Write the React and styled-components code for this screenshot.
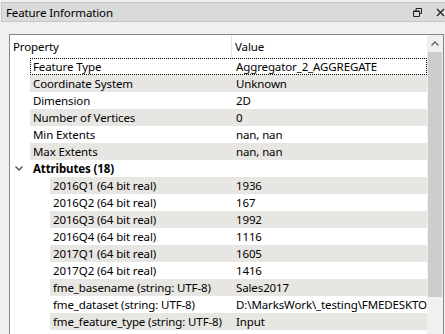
import styled, { createGlobalStyle } from 'styled-components';

const GlobalStyle = createGlobalStyle`
  html, body {
    margin: 0;
    padding: 0;
    background: #f0f0f0;
    overflow: hidden;
  }
  body {
    font-family: "Noto Sans", "Open Sans", sans-serif;
    font-size: 11.5px;
    letter-spacing: -0.12px;
    color: #000;
  }
`;

const SWindow = styled.div`
  width: 445px;
  height: 334px;
  padding-top: 2px;
  box-sizing: border-box;
  display: flex;
  flex-direction: column;
  overflow: hidden;
  background: #f0f0f0;
`;

const STitleBar = styled.div`
  height: 18px;
  margin-left: 1px;
  border: 1px solid #c6c6c6;
  border-right: none;
  background: #dadada;
  display: flex;
  align-items: center;
  padding-left: 4px;
  flex-shrink: 0;
`;

const STitle = styled.span`
  flex: 1;
  font-size: 11.5px;
`;

const STitleButton = styled.span`
  width: 10px;
  height: 10px;
  display: flex;
  align-items: center;
  justify-content: center;
  margin-left: ${(p) => p.gap || 0}px;
`;

const SBody = styled.div`
  flex: 1;
  padding: 12px 1px 0 9px;
  min-height: 0;
`;

const STree = styled.div`
  height: 100%;
  border: 1px solid #828790;
  border-bottom: none;
  background: #fff;
  display: flex;
`;

const SMain = styled.div`
  flex: 1;
  display: flex;
  flex-direction: column;
  min-width: 0;
  overflow: hidden;
`;

const SHeader = styled.div`
  height: 23px;
  display: flex;
  flex-shrink: 0;
`;

const SHeaderCell = styled.div`
  width: ${(p) => (p.w ? `${p.w}px` : 'auto')};
  flex: ${(p) => (p.w ? 'none' : 1)};
  padding-left: ${(p) => p.pad}px;
  display: flex;
  align-items: center;
  border-right: ${(p) => (p.w ? '1px solid #e5e5e5' : 'none')};
  box-sizing: border-box;
`;

const SRow = styled.div`
  height: 17px;
  display: flex;
  align-items: center;
  flex-shrink: 0;
`;

const SToggle = styled.span`
  width: ${(p) => p.indent}px;
  height: 17px;
  display: flex;
  align-items: center;
  justify-content: flex-start;
  padding-left: 5px;
  box-sizing: border-box;
  flex-shrink: 0;
`;

const SBand = styled.div`
  flex: 1;
  height: 17px;
  display: flex;
  align-items: center;
  background: ${(p) => (p.shaded ? '#e8e6e2' : '#fff')};
  outline: ${(p) => (p.focused ? '1px dotted #000' : 'none')};
  outline-offset: -1px;
  white-space: nowrap;
  overflow: hidden;
`;

const SName = styled.span`
  width: ${(p) => p.w}px;
  padding-left: 3px;
  box-sizing: border-box;
  flex-shrink: 0;
  font-weight: ${(p) => (p.bold ? 700 : 400)};
  overflow: hidden;
`;

const SValue = styled.span`
  flex: 1;
  padding-left: 4px;
  overflow: hidden;
  white-space: nowrap;
`;

const SScrollbar = styled.div`
  width: 16px;
  flex-shrink: 0;
  background: #f0f0f0;
  display: flex;
  flex-direction: column;
  align-items: center;
`;

const SArrow = styled.div`
  height: 17px;
  width: 16px;
  display: flex;
  align-items: center;
  justify-content: center;
`;

const SThumb = styled.div`
  width: 14px;
  height: 245px;
  background: #cdcdcd;
`;

const COL = 222;

const rows = [
  { name: 'Feature Type', value: 'Aggregator_2_AGGREGATE', level: 1, focused: true },
  { name: 'Coordinate System', value: 'Unknown', level: 1, shaded: true },
  { name: 'Dimension', value: '2D', level: 1 },
  { name: 'Number of Vertices', value: '0', level: 1, shaded: true },
  { name: 'Min Extents', value: 'nan, nan', level: 1 },
  { name: 'Max Extents', value: 'nan, nan', level: 1, shaded: true },
  { name: 'Attributes (18)', value: '', level: 1, bold: true, open: true },
  { name: '2016Q1 (64 bit real)', value: '1936', level: 2, shaded: true },
  { name: '2016Q2 (64 bit real)', value: '167', level: 2 },
  { name: '2016Q3 (64 bit real)', value: '1992', level: 2, shaded: true },
  { name: '2016Q4 (64 bit real)', value: '1116', level: 2 },
  { name: '2017Q1 (64 bit real)', value: '1605', level: 2, shaded: true },
  { name: '2017Q2 (64 bit real)', value: '1416', level: 2 },
  { name: 'fme_basename (string: UTF-8)', value: 'Sales2017', level: 2, shaded: true },
  { name: 'fme_dataset (string: UTF-8)', value: 'D:\\MarksWork\\_testing\\FMEDESKTOP_Sales2017.xlsx', level: 2 },
  { name: 'fme_feature_type (string: UTF-8)', value: 'Input', level: 2, shaded: true },
  { name: 'fme_geometry (string: UTF-8)', value: 'fme_aggregate', level: 2 },
];

const Chevron = () => (
  <svg width="8" height="5" viewBox="0 0 8 5">
    <path d="M0.5 0.5 L4 4 L7.5 0.5" fill="none" stroke="#4a4a4a" strokeWidth="1.3" />
  </svg>
);

const App = () => {
  return (
    <SWindow>
      <GlobalStyle />
      <STitleBar>
        <STitle>Feature Information</STitle>
        <STitleButton>
          <svg width="9" height="9" viewBox="0 0 9 9">
            <path d="M3 0.5 H8.5 V5.5 H6.5 M0.5 3 H6.5 V8.5 H0.5 Z M3 0.5 V3" fill="none" stroke="#222" strokeWidth="1" />
            <path d="M0.5 3.5 H6.5" stroke="#222" strokeWidth="1" />
          </svg>
        </STitleButton>
        <STitleButton gap={13}>
          <svg width="9" height="9" viewBox="0 0 9 9">
            <path d="M1 1 L8 8 M8 1 L1 8" stroke="#222" strokeWidth="1.3" />
          </svg>
        </STitleButton>
      </STitleBar>
      <SBody>
        <STree>
          <SMain>
            <SHeader>
              <SHeaderCell w={COL} pad={3}>Property</SHeaderCell>
              <SHeaderCell pad={3}>Value</SHeaderCell>
            </SHeader>
            {rows.map((r) => {
              const indent = r.level * 20;
              return (
                <SRow key={r.name}>
                  <SToggle indent={indent}>{r.open && <Chevron />}</SToggle>
                  <SBand shaded={r.shaded} focused={r.focused}>
                    <SName w={COL - indent} bold={r.bold}>{r.name}</SName>
                    <SValue>{r.value}</SValue>
                  </SBand>
                </SRow>
              );
            })}
          </SMain>
          <SScrollbar>
            <SArrow>
              <svg width="8" height="5" viewBox="0 0 8 5">
                <path d="M0.5 4.5 L4 1 L7.5 4.5" fill="none" stroke="#606060" strokeWidth="1.3" />
              </svg>
            </SArrow>
            <SThumb />
          </SScrollbar>
        </STree>
      </SBody>
    </SWindow>
  );
};

export default App;
